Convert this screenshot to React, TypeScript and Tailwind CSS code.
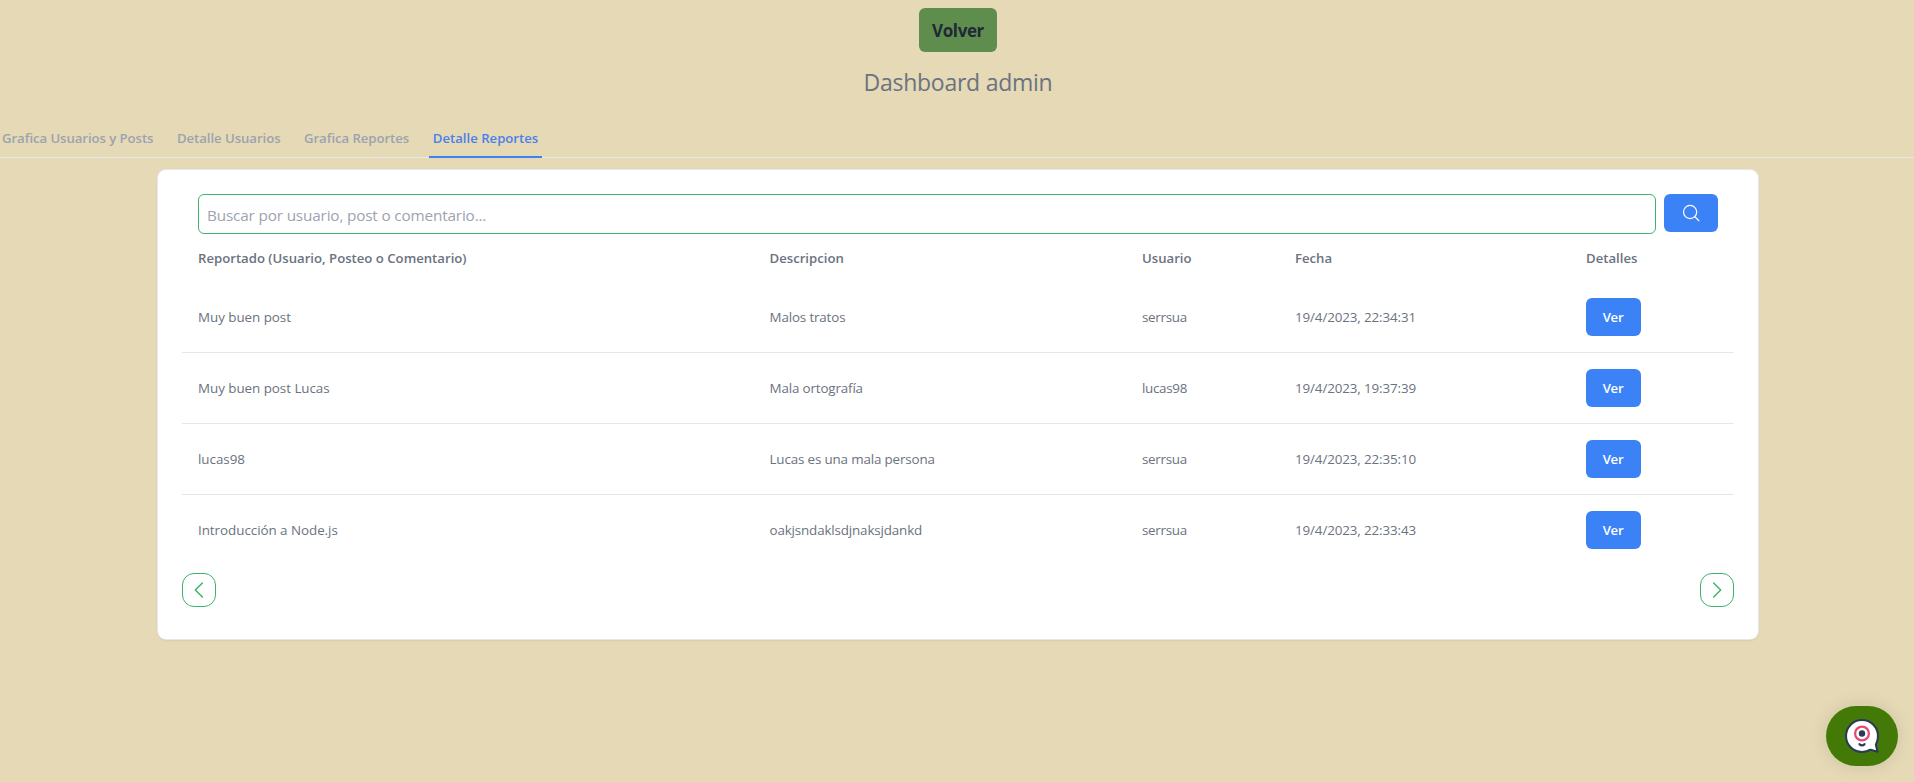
const TABS = [
  "Grafica Usuarios y Posts",
  "Detalle Usuarios",
  "Grafica Reportes",
  "Detalle Reportes",
];

const HEADERS = [
  "Reportado (Usuario, Posteo o Comentario)",
  "Descripcion",
  "Usuario",
  "Fecha",
  "Detalles",
];

const ROWS = [
  ["Muy buen post", "Malos tratos", "serrsua", "19/4/2023, 22:34:31"],
  ["Muy buen post Lucas", "Mala ortografía", "lucas98", "19/4/2023, 19:37:39"],
  ["lucas98", "Lucas es una mala persona", "serrsua", "19/4/2023, 22:35:10"],
  ["Introducción a Node.js", "oakjsndaklsdjnaksjdankd", "serrsua", "19/4/2023, 22:33:43"],
];

const TRACKING = [
  "tracking-[-0.04px]",
  "tracking-[-0.15px]",
  "tracking-[-0.3px]",
  "tracking-[-0.12px]",
];

const COLS = "grid grid-cols-[571.5px_372.5px_153px_291px_1fr]";

function Chevron({ d }: { d: string }) {
  return (
    <svg
      className="size-[18px]"
      viewBox="0 0 16 16"
      fill="none"
      stroke="currentColor"
      strokeWidth="1.3"
      strokeLinecap="round"
      strokeLinejoin="round"
    >
      <path d={d} />
    </svg>
  );
}

function PageButton({ d, label }: { d: string; label: string }) {
  return (
    <button
      aria-label={label}
      className="flex size-[34px] items-center justify-center rounded-xl border border-[#3db36c] text-[#3db36c]"
    >
      <Chevron d={d} />
    </button>
  );
}

function SearchIcon() {
  return (
    <svg
      className="size-[18px]"
      viewBox="0 0 18 18"
      fill="none"
      stroke="currentColor"
      strokeWidth="1.2"
      strokeLinecap="round"
    >
      <circle cx="8.1" cy="8" r="6.6" />
      <path d="m12.900 12.800 4 3.900" />
    </svg>
  );
}

function ChatButton() {
  return (
    <button
      aria-label="Chat"
      className="fixed right-4 bottom-4 flex h-[60px] w-[72px] items-center justify-center rounded-[30px] bg-[#437a07] shadow-[0_0_18px_rgba(0,0,0,0.1)]"
    >
      <svg className="size-9" viewBox="0 0 36 36" fill="none">
        <path
          d="M18 2C9.100 2 2 9.100 2 18s7.100 16 16 16c3.300 0 6-.900 8.600-2.200l6.900 1.900-1.600-7C33.300 24.200 34 21.200 34 18 34 9.100 26.900 2 18 2Z"
          fill="#fff"
          stroke="#2b3b55"
          strokeWidth="2.1"
          strokeLinejoin="round"
        />
        <circle cx="18" cy="15.5" r="6.9" stroke="#e34b73" strokeWidth="2.3" />
        <circle cx="18" cy="15.5" r="3.2" fill="#2b3b55" />
        <path
          d="M15.500 26.200c1.400 1.600 3.600 1.600 5 0"
          stroke="#2b3b55"
          strokeWidth="2.2"
          strokeLinecap="round"
        />
      </svg>
    </button>
  );
}

export default function App() {
  return (
    <div className="h-[782px] overflow-hidden bg-[#e5d9b6] font-['Open_Sans','Noto_Sans',sans-serif] text-[13.16px] text-[#6b7280]">
      <div className="flex w-[1916px] flex-col">
        <header className="flex flex-col items-center pt-2">
          <button className="h-11 w-[78px] rounded-md bg-[#5f8d4e] pt-px text-[17px] font-bold tracking-[-0.4px] text-[#1f2937]">
            Volver
          </button>
          <h1 className="mt-3 text-[23px] leading-9 tracking-[-0.25px]">Dashboard admin</h1>
        </header>

        <nav className="mt-[22px] flex h-[36px] border-b border-[#e5e7eb] font-semibold text-[#9ca3af]">
          {TABS.map((tab, i) => (
            <button
              key={tab}
              className={
                i === TABS.length - 1
                  ? "-mb-px h-[36px] w-[113px] border-b-2 border-[#3b82f6] text-center whitespace-nowrap text-[#4a80ea]"
                  : i === 0
                    ? "h-[34px] w-[177px] pl-0.5 text-left tracking-[-0.06px] whitespace-nowrap"
                    : i === 1
                      ? "h-[34px] w-[127px] text-left tracking-[-0.05px] whitespace-nowrap"
                      : "h-[34px] w-[125px] text-left tracking-[-0.05px] whitespace-nowrap"
              }
            >
              {tab}
            </button>
          ))}
        </nav>

        <main className="mx-auto mt-3 h-[469px] w-[1600px] rounded-lg bg-white px-6 pt-6 shadow-sm ring-1 ring-[#e5e7eb]">
          <div className="flex gap-2 px-4">
            <input
              className="h-10 w-[1458px] rounded-md border border-[#3db36c] px-2 pt-0.5 text-[15.3px] tracking-[-0.16px] placeholder:text-[#9ca3af]"
              placeholder="Buscar por usuario, post o comentario..."
            />
            <button
              aria-label="Buscar"
              className="flex h-[38px] w-[54px] items-center justify-center rounded-md bg-[#3b82f6] text-white"
            >
              <SearchIcon />
            </button>
          </div>

          <section>
            <div className={`${COLS} h-[48px] font-semibold`}>
              {HEADERS.map((h) => (
                <div key={h} className="px-4 pt-[14px] leading-5 whitespace-nowrap">
                  {h}
                </div>
              ))}
            </div>
            <div className="divide-y divide-[#e5e7eb]">
              {ROWS.map((row, r) => (
                <div key={r} className={`${COLS} h-[71px] items-center last:h-[70px]`}>
                  {row.map((cell, c) => (
                    <div
                      key={c}
                      className={`px-4 pt-px text-[13.4px] whitespace-nowrap ${TRACKING[c]}`}
                    >
                      {cell}
                    </div>
                  ))}
                  <div className="px-4">
                    <button className="h-[38px] w-[55px] rounded-md bg-[#3b82f6] pt-px pr-px font-semibold tracking-[-0.3px] text-white">
                      Ver
                    </button>
                  </div>
                </div>
              ))}
            </div>
          </section>

          <footer className="mt-2 flex justify-between">
            <PageButton label="Anterior" d="M11 1.800 4.700 8 11 14.200" />
            <PageButton label="Siguiente" d="M5 1.800 11.300 8 5 14.200" />
          </footer>
        </main>
      </div>

      <ChatButton />
    </div>
  );
}
